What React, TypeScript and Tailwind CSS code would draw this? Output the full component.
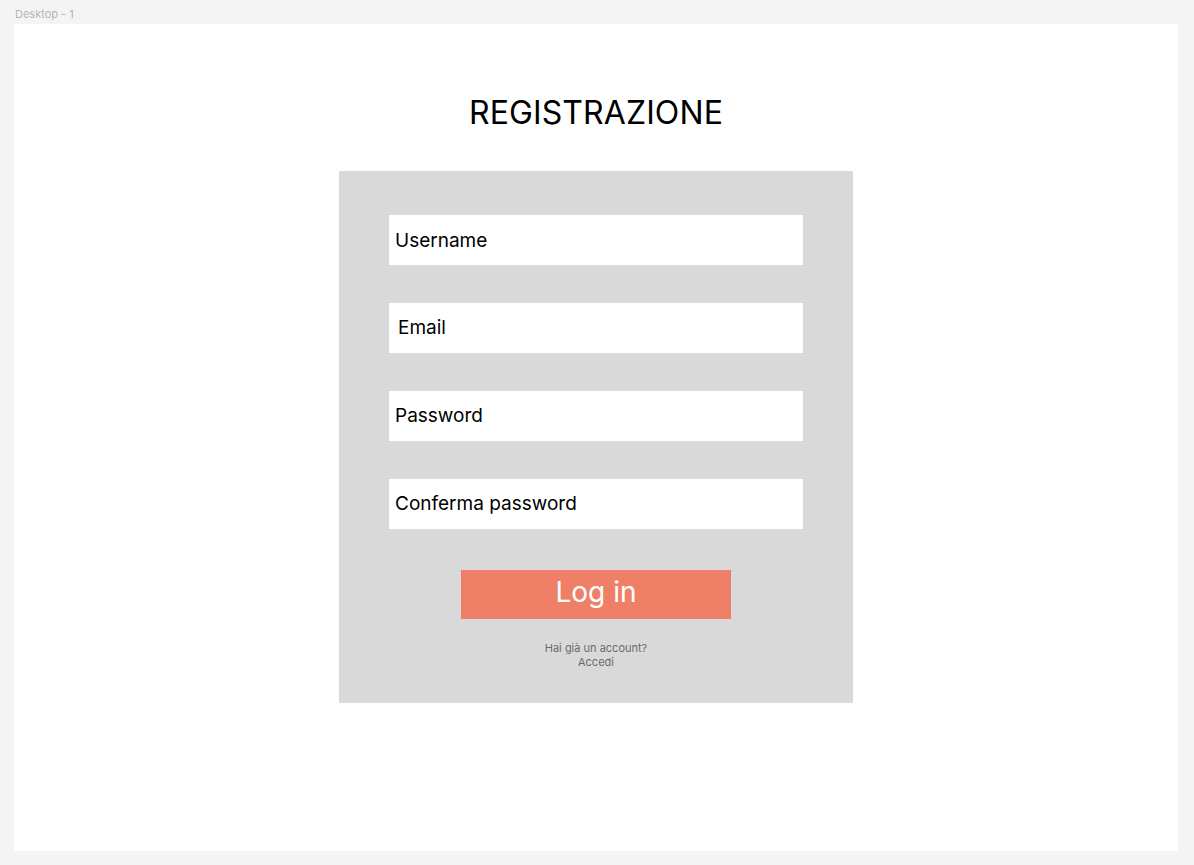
export default function App() {
  const fields = [
    { label: "Username", pad: "pl-[6px] pt-[2px]" },
    { label: "Email", pad: "pl-[9px] pt-px" },
    { label: "Password", pad: "pl-[6px] pt-px" },
    { label: "Conferma password", pad: "pl-[6px]" },
  ];

  return (
    <div
      className="min-h-screen w-full bg-[#f4f4f4] pl-[14px] pr-[16px] pb-[14px]"
      style={{ fontFamily: "Inter, 'Noto Sans', sans-serif" }}
    >
      {/* frame label */}
      <div className="h-[24px] pt-[7px] pl-px text-[11px] leading-[14px] text-[#b5b5b5]">
        Desktop - 1
      </div>

      {/* frame */}
      <div className="h-[827px] bg-white flex flex-col items-center pt-[69px]">
        <h1 className="text-[32px] leading-[39px] font-normal text-black tracking-[0.1px]">
          REGISTRAZIONE
        </h1>

        {/* form card */}
        <div className="mt-[39px] w-[514px] bg-[#d9d9d9] flex flex-col items-center pt-[44px] pb-[34px]">
          <div className="flex flex-col gap-[38px]">
            {fields.map((f) => (
              <div
                key={f.label}
                className={`w-[414px] h-[50px] bg-white flex items-center ${f.pad} text-[19px] text-black`}
              >
                {f.label}
              </div>
            ))}
          </div>

          <button className="mt-[41px] w-[270px] h-[49px] bg-[#f07f67] text-white text-[28px] leading-none flex items-center justify-center pb-[5px]">
            Log in
          </button>

          <div className="mt-[22px] text-[11px] leading-[14px] text-[#6b6b6b] text-center">
            <div>Hai già un account?</div>
            <div>Accedi</div>
          </div>
        </div>
      </div>
    </div>
  );
}
